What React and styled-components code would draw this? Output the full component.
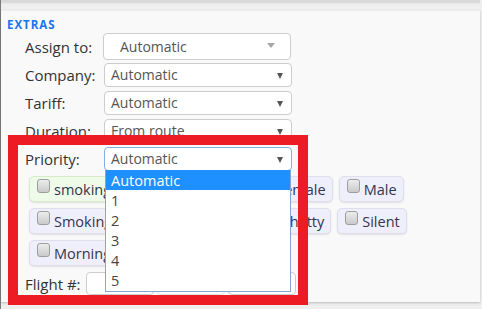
import React from "react";
import styled, { createGlobalStyle } from "styled-components";

const GlobalStyle = createGlobalStyle`
  html, body {
    margin: 0;
    padding: 0;
  }
  body {
    background: #efefef;
    font-family: "Open Sans", "Liberation Sans", sans-serif;
    width: 482px;
    height: 309px;
    overflow: hidden;
  }
`;

const extraRows = [
    { label: "Company:", value: "Automatic" },
    { label: "Tariff:", value: "Automatic" },
    { label: "Duration:", value: "From route" },
];

const chips = [
    { text: "smoking allowed in a coach", tone: "green" },
    { text: "Female" },
    { text: "Male" },
    { text: "Smoking forbidden in buses" },
    { text: "Chatty" },
    { text: "Silent" },
    { text: "Morning person" },
];

const priorities = ["Automatic", "1", "2", "3", "4", "5", "6"];

export default function App() {
    return (
        <>
            <GlobalStyle />
            <Page>
                <TopEdge />
                <Panel>
                    <Title>EXTRAS</Title>
                    <Form>
                        <Row $tight>
                            <Label>Assign to:</Label>
                            <ComboBox>
                                Automatic
                                <SoftArrow />
                            </ComboBox>
                        </Row>
                        {extraRows.map((r) => (
                            <Row key={r.label}>
                                <Label>{r.label}</Label>
                                <Select>
                                    {r.value}
                                    <Arrow />
                                </Select>
                            </Row>
                        ))}
                        <Row>
                            <Label>Priority:</Label>
                            <SelectWrap>
                                <Select $focused>
                                    Automatic
                                    <Arrow />
                                </Select>
                                <OptionList>
                                    {priorities.map((p, i) => (
                                        <Option key={p} $active={i === 0}>
                                            {p}
                                        </Option>
                                    ))}
                                </OptionList>
                            </SelectWrap>
                        </Row>
                        <Chips>
                            {chips.map((c) => (
                                <Chip key={c.text} $tone={c.tone}>
                                    <Box />
                                    <span>{c.text}</span>
                                </Chip>
                            ))}
                        </Chips>
                        <FlightRow>
                            <FlightLabel>Flight #:</FlightLabel>
                            <Input />
                            <Input $faint />
                            <Input />
                        </FlightRow>
                    </Form>
                </Panel>
                <Highlight />
            </Page>
        </>
    );
}

const Page = styled.div`
    position: relative;
    height: 309px;
    border-left: 1px solid #7c7c7c;
    box-sizing: border-box;
`;

const TopEdge = styled.div`
    height: 2px;
    margin-right: 2px;
    background: #d8d8d8;
    box-shadow: 0 1px 2px rgba(0, 0, 0, 0.12);
    margin-bottom: 8px;
`;

const Panel = styled.div`
    height: 292px;
    margin-right: 2px;
    background: #f9f9f9;
    box-shadow: 0 1px 2px rgba(0, 0, 0, 0.22);
    border-top: 1px solid #ececec;
    box-sizing: border-box;
    padding: 6px 0 0 6px;
`;

const Title = styled.div`
    font-size: 11.5px;
    font-weight: 700;
    letter-spacing: 1px;
    line-height: 15px;
    color: #1a73e8;
`;

const Form = styled.div`
    display: flex;
    flex-direction: column;
    gap: 4px;
    margin: 1px 0 0 18px;
`;

const Row = styled.div`
    display: flex;
    align-items: center;
    position: relative;
    margin-bottom: ${(p) => (p.$tight ? "-1px" : "0")};
`;

const Label = styled.div`
    width: 78px;
    font-size: 15px;
    color: #333;
`;

const ComboBox = styled.div`
    position: relative;
    width: 188px;
    height: 27px;
    box-sizing: border-box;
    border: 1px solid #cdcdcd;
    border-radius: 4px;
    background: #fff;
    padding-left: 16px;
    font-size: 14px;
    line-height: 25px;
    color: #555;
`;

const SoftArrow = styled.span`
    position: absolute;
    right: 15px;
    top: 9px;
    border-left: 4.5px solid transparent;
    border-right: 4.5px solid transparent;
    border-top: 5px solid #a6a6a6;
`;

const SelectWrap = styled.div`
    position: relative;
    margin-left: 1px;
`;

const Select = styled.div`
    position: relative;
    width: 188px;
    height: 24px;
    box-sizing: border-box;
    border: 1px solid ${(p) => (p.$focused ? "#86aee6" : "#cdcdcd")};
    border-radius: 4px;
    background: #fff;
    padding-left: 6px;
    font-size: 14px;
    line-height: 22px;
    color: #555;
    margin-left: ${(p) => (p.$focused ? "0" : "1px")};
`;

const Arrow = styled.span`
    position: absolute;
    right: 8px;
    top: 9px;
    border-left: 3.5px solid transparent;
    border-right: 3.5px solid transparent;
    border-top: 6px solid #555;
`;

const OptionList = styled.div`
    position: absolute;
    left: 1px;
    top: 23px;
    width: 186px;
    height: 122px;
    overflow: hidden;
    box-sizing: border-box;
    background: #fff;
    border: 1px solid #8aa3d6;
    border-top: none;
    z-index: 2;
`;

const Option = styled.div`
    height: 20px;
    line-height: 21px;
    padding-left: 5px;
    font-size: 14.5px;
    color: ${(p) => (p.$active ? "#fff" : "#4a4440")};
    background: ${(p) => (p.$active ? "#1e90ff" : "transparent")};
`;

const Chips = styled.div`
    display: flex;
    flex-wrap: wrap;
    gap: 6px;
    width: 400px;
    margin: 1px 0 0 4px;
`;

const Chip = styled.div`
    display: flex;
    align-items: center;
    height: 26px;
    box-sizing: border-box;
    padding: 0 6px 0 7px;
    border: 1px solid ${(p) => (p.$tone === "green" ? "#d6ebcc" : "#dedeed")};
    border-radius: 5px;
    background: ${(p) => (p.$tone === "green" ? "#effbe9" : "#efeffc")};
    box-shadow: 0 1px 2px rgba(0, 0, 0, 0.1);
    font-size: 14.5px;
    color: #34344e;
    white-space: nowrap;
`;

const Box = styled.span`
    align-self: flex-start;
    margin: 2px 4px 0 0;
    width: 13px;
    height: 14px;
    box-sizing: border-box;
    border: 1px solid #9e9e9e;
    border-radius: 3px;
    background: linear-gradient(#ececec, #cacaca);
`;

const FlightRow = styled.div`
    display: flex;
    align-items: center;
    gap: 3px;
    margin-top: 2px;
`;

const FlightLabel = styled.div`
    width: 58px;
    font-size: 15px;
    color: #333;
`;

const Input = styled.div`
    width: 68px;
    height: 23px;
    box-sizing: border-box;
    border: 1px solid ${(p) => (p.$faint ? "#e4e4e4" : "#cdcdcd")};
    border-radius: 4px;
    background: #fff;
`;

const Highlight = styled.div`
    position: absolute;
    left: 7px;
    top: 135px;
    width: 300px;
    height: 170px;
    box-sizing: border-box;
    border: 10px solid #ed1c24;
    z-index: 5;
`;
